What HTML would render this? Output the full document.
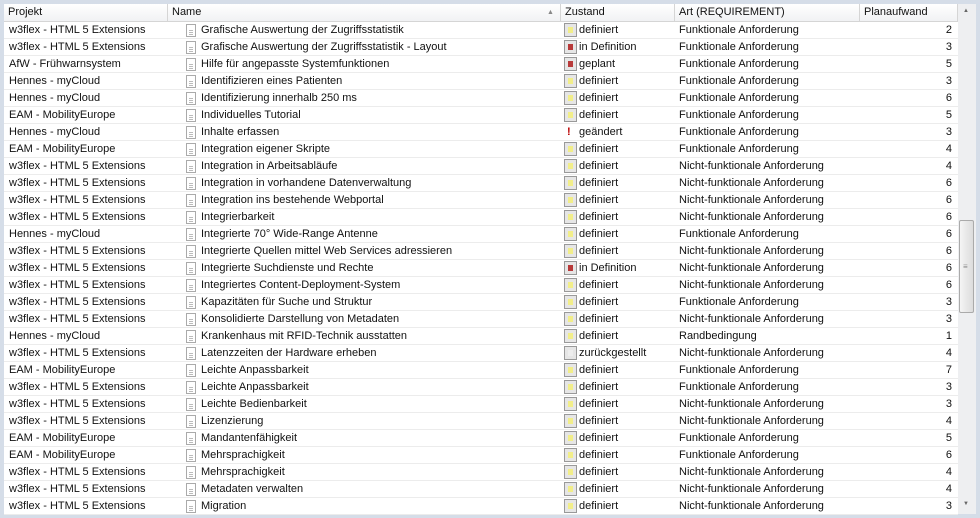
<html><head><style>
body{margin:0;width:980px;height:518px;background:#d5dde8;font-family:"Liberation Sans",sans-serif;font-size:11px;color:#111;overflow:hidden;position:relative}
.f{position:absolute;left:4px;top:4px;width:954px;height:510px;background:#fff}
.h{position:absolute;top:4px;height:17px;background:linear-gradient(#fff,#f1f2f4);border-bottom:1px solid #d5d5d5;line-height:17px}
.h span{position:absolute;top:0;padding-left:4px;border-right:1px solid #d5d5d5;height:17px;box-sizing:border-box}
.r{position:absolute;left:4px;width:954px;height:17px;line-height:17px;border-bottom:1px solid #ececec;box-sizing:border-box}
.r span{position:absolute;top:0;white-space:nowrap}
.d{width:10px;height:13px;border:1px solid #aaa;background:#fff;top:2px!important;box-sizing:border-box}
.d i{position:absolute;left:2px;width:4px;height:1px;background:#bbb}
.s{width:13px;height:14px;border:1px solid #999;background:#e6e6e6;top:1px!important;box-sizing:border-box}
.s i{position:absolute;left:3px;top:3px;width:5px;height:6px}
.sb{position:absolute;left:958px;top:4px;width:18px;height:510px;background:#eeeff1}
</style></head><body>
<div class="f"></div>
<div class="h" style="left:4px;width:954px">
<span style="left:0;width:164px">Projekt</span><span style="left:164px;width:393px">Name</span><span style="left:557px;width:114px">Zustand<b style="position:absolute;left:-14px;font-size:7px;color:#888;font-weight:normal">▲</b></span><span style="left:671px;width:185px">Art (REQUIREMENT)</span><span style="left:856px;width:98px">Planaufwand</span></div>
<div class="sb"><div style="position:absolute;left:5px;top:4px;font-size:6px;color:#666">▲</div><div style="position:absolute;left:1px;top:216px;width:15px;height:93px;border:1px solid #aaa;border-radius:2px;background:linear-gradient(90deg,#f5f5f5,#dcdcdc);box-sizing:border-box"></div><div style="position:absolute;left:5px;top:258px;font-size:8px;color:#888">≡</div><div style="position:absolute;left:5px;top:497px;font-size:6px;color:#666">▼</div></div>
<div id="rows"></div>
<script>
var d=[["w3flex - HTML 5 Extensions","Grafische Auswertung der Zugriffsstatistik","y","definiert","Funktionale Anforderung",2],
["w3flex - HTML 5 Extensions","Grafische Auswertung der Zugriffsstatistik - Layout","r","in Definition","Funktionale Anforderung",3],
["AfW - Frühwarnsystem","Hilfe für angepasste Systemfunktionen","r","geplant","Funktionale Anforderung",5],
["Hennes - myCloud","Identifizieren eines Patienten","y","definiert","Funktionale Anforderung",3],
["Hennes - myCloud","Identifizierung innerhalb 250 ms","y","definiert","Funktionale Anforderung",6],
["EAM - MobilityEurope","Individuelles Tutorial","y","definiert","Funktionale Anforderung",5],
["Hennes - myCloud","Inhalte erfassen","!","geändert","Funktionale Anforderung",3],
["EAM - MobilityEurope","Integration eigener Skripte","y","definiert","Funktionale Anforderung",4],
["w3flex - HTML 5 Extensions","Integration in Arbeitsabläufe","y","definiert","Nicht-funktionale Anforderung",4],
["w3flex - HTML 5 Extensions","Integration in vorhandene Datenverwaltung","y","definiert","Nicht-funktionale Anforderung",6],
["w3flex - HTML 5 Extensions","Integration ins bestehende Webportal","y","definiert","Nicht-funktionale Anforderung",6],
["w3flex - HTML 5 Extensions","Integrierbarkeit","y","definiert","Nicht-funktionale Anforderung",6],
["Hennes - myCloud","Integrierte 70° Wide-Range Antenne","y","definiert","Funktionale Anforderung",6],
["w3flex - HTML 5 Extensions","Integrierte Quellen mittel Web Services adressieren","y","definiert","Nicht-funktionale Anforderung",6],
["w3flex - HTML 5 Extensions","Integrierte Suchdienste und Rechte","r","in Definition","Nicht-funktionale Anforderung",6],
["w3flex - HTML 5 Extensions","Integriertes Content-Deployment-System","y","definiert","Nicht-funktionale Anforderung",6],
["w3flex - HTML 5 Extensions","Kapazitäten für Suche und Struktur","y","definiert","Funktionale Anforderung",3],
["w3flex - HTML 5 Extensions","Konsolidierte Darstellung von Metadaten","y","definiert","Nicht-funktionale Anforderung",3],
["Hennes - myCloud","Krankenhaus mit RFID-Technik ausstatten","y","definiert","Randbedingung",1],
["w3flex - HTML 5 Extensions","Latenzzeiten der Hardware erheben","g","zurückgestellt","Nicht-funktionale Anforderung",4],
["EAM - MobilityEurope","Leichte Anpassbarkeit","y","definiert","Funktionale Anforderung",7],
["w3flex - HTML 5 Extensions","Leichte Anpassbarkeit","y","definiert","Funktionale Anforderung",3],
["w3flex - HTML 5 Extensions","Leichte Bedienbarkeit","y","definiert","Nicht-funktionale Anforderung",3],
["w3flex - HTML 5 Extensions","Lizenzierung","y","definiert","Nicht-funktionale Anforderung",4],
["EAM - MobilityEurope","Mandantenfähigkeit","y","definiert","Funktionale Anforderung",5],
["EAM - MobilityEurope","Mehrsprachigkeit","y","definiert","Funktionale Anforderung",6],
["w3flex - HTML 5 Extensions","Mehrsprachigkeit","y","definiert","Nicht-funktionale Anforderung",4],
["w3flex - HTML 5 Extensions","Metadaten verwalten","y","definiert","Nicht-funktionale Anforderung",4],
["w3flex - HTML 5 Extensions","Migration","y","definiert","Nicht-funktionale Anforderung",3]];
var h="";d.forEach(function(r,i){var t=22+17*i;var st;
if(r[2]=="!")st='<span style="left:563px;color:#b00;font-weight:bold">!</span>';
else st='<span class="s" style="left:560px"><i style="background:'+(r[2]=="y"?"#f2ee8a":r[2]=="r"?"#b83a3a":"#eee")+'"></i></span>';
h+='<div class="r" style="top:'+t+'px"><span style="left:5px">'+r[0]+'</span><span class="d" style="left:182px"><i style="top:5px"></i><i style="top:7px"></i><i style="top:9px"></i></span><span style="left:197px">'+r[1]+'</span>'+st+'<span style="left:575px">'+r[3]+'</span><span style="left:675px">'+r[4]+'</span><span style="left:856px;width:92px;text-align:right">'+r[5]+'</span></div>';});
document.getElementById("rows").innerHTML=h;
</script>
</body></html>
